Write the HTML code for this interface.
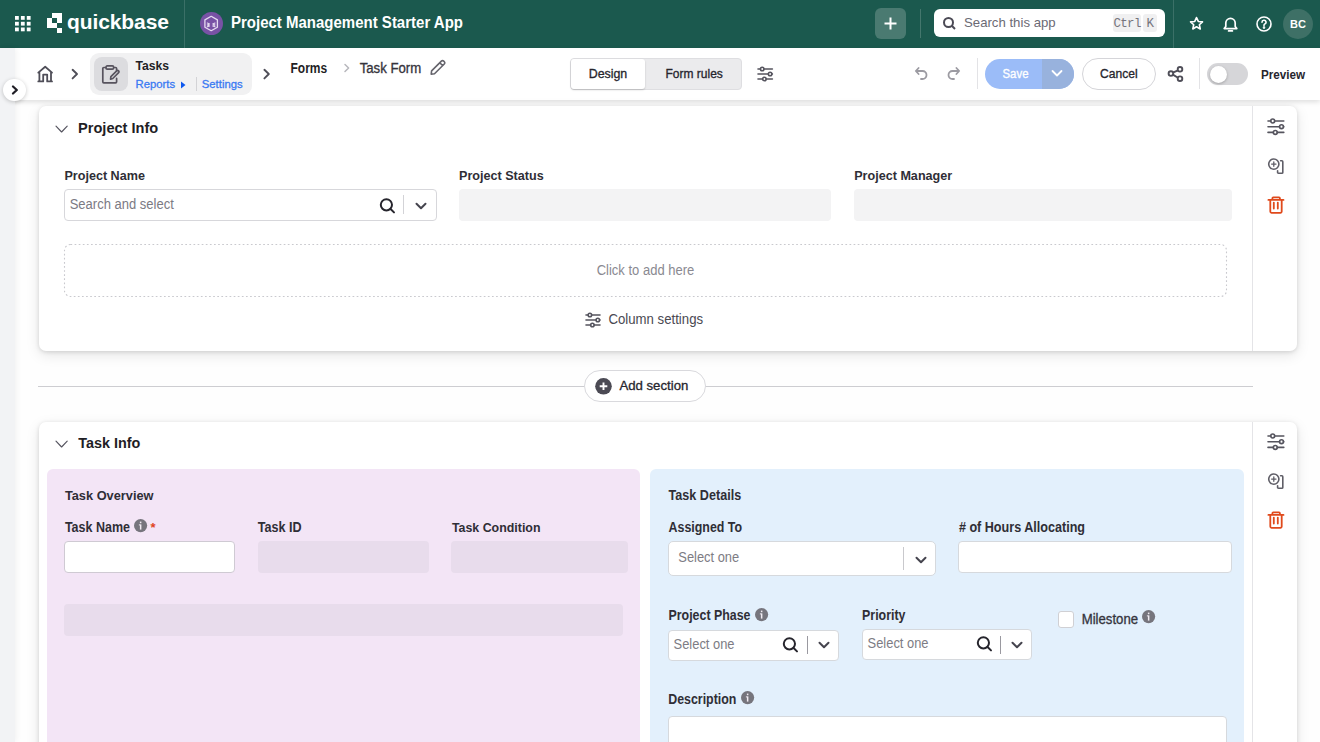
<!DOCTYPE html>
<html><head><meta charset="utf-8">
<style>
*{box-sizing:border-box;margin:0;padding:0}
html,body{width:1320px;height:742px;overflow:hidden;background:#fefefe;font-family:"Liberation Sans",sans-serif;color:#26252d}
.a{position:absolute}
.t{position:absolute;white-space:nowrap;line-height:1}
.m{-webkit-text-stroke:0.3px currentColor}
.lbl,.ph,.t{transform-origin:0 84.5%}
svg{position:absolute;overflow:visible}
#hdr{left:0;top:0;width:1320px;height:48px;background:#1b594e}
#tb{left:0;top:48px;width:1320px;height:52px;background:#fff;box-shadow:0 2px 5px rgba(0,0,0,0.13)}
#side{left:0;top:48px;width:15px;height:694px;background:#f2f3f5;box-shadow:1px 0 6px rgba(0,0,0,0.06)}
.card{position:absolute;background:#fff;border-radius:7px;box-shadow:0 1px 4px rgba(0,0,0,0.13),0 4px 14px rgba(0,0,0,0.10)}
.lbl{position:absolute;white-space:nowrap;line-height:1;font-weight:bold;font-size:12.5px;color:#2f2e36}
.inp{position:absolute;background:#fff;border:1px solid #d7d7db;border-radius:4px}
.ro{position:absolute;background:#f3f3f4;border-radius:4px}
.ph{position:absolute;white-space:nowrap;line-height:1;font-size:13px;color:#7b7a83}
</style></head><body>

<!-- HEADER -->
<div id="hdr" class="a">
  <!-- grid icon -->
  <svg style="left:15.2px;top:16px" width="16" height="16" viewBox="0 0 16 16" fill="#fff"><rect x="0" y="0" width="3.8" height="3.8"/><rect x="5.9" y="0" width="3.8" height="3.8"/><rect x="11.8" y="0" width="3.8" height="3.8"/><rect x="0" y="5.8" width="3.8" height="3.8"/><rect x="5.9" y="5.8" width="3.8" height="3.8"/><rect x="11.8" y="5.8" width="3.8" height="3.8"/><rect x="0" y="11.5" width="3.8" height="3.8"/><rect x="5.9" y="11.5" width="3.8" height="3.8"/><rect x="11.8" y="11.5" width="3.8" height="3.8"/></svg>
  <!-- logo mark -->
  <svg style="left:47px;top:13px" width="15" height="20" viewBox="0 0 15 20" fill="#fff">
    <rect x="5" y="0" width="10" height="5"/>
    <rect x="0" y="5" width="5" height="5"/><rect x="10" y="5" width="5" height="5"/>
    <rect x="0" y="10" width="10" height="5"/>
    <rect x="10" y="15" width="5" height="5"/>
  </svg>
  <div class="t" style="left:67px;top:11px;font-size:21px;font-weight:bold;color:#fff;letter-spacing:-0.1px">quickbase</div>
  <div class="a" style="left:184px;top:0;width:1px;height:48px;background:rgba(255,255,255,0.14)"></div>
  <div class="a" style="left:200px;top:12px;width:23px;height:23px;border-radius:50%;background:#7852a5"></div>
  <svg style="left:200px;top:12px" width="23" height="23" viewBox="0 0 23 23" fill="none" stroke="#e6dbf1" stroke-width="1.3" stroke-linejoin="round" stroke-linecap="round">
    <path d="M11.2 4.3L17.4 7.9V15.2L11.2 18.7L4.9 15.2V7.9Z"/>
    <path d="M7.3 11L9.6 11.9L7.3 12.9L9.6 13.9L7.3 14.8M15 11L12.7 11.9L15 12.9L12.7 13.9L15 14.8" stroke-width="1.1"/>
  </svg>
  <div class="t" style="left:231px;top:15px;font-size:15px;font-weight:bold;color:#fff;transform:scaleY(1.05)">Project Management Starter App</div>

  <div class="a" style="left:875px;top:8px;width:31px;height:31px;border-radius:6px;background:#4a7a71"></div>
  <svg style="left:884px;top:17px" width="13" height="13" viewBox="0 0 13 13" stroke="#fff" stroke-width="2"><path d="M6.5 0.5V12.5M0.5 6.5H12.5"/></svg>
  <div class="a" style="left:920px;top:9px;width:1px;height:29px;background:rgba(255,255,255,0.18)"></div>
  <div class="a" style="left:934px;top:9px;width:231px;height:28px;border-radius:6px;background:#fff"></div>
  <svg style="left:943px;top:17px" width="13" height="13" viewBox="0 0 13 13" fill="none" stroke="#4b4a55" stroke-width="2"><circle cx="5.5" cy="5.5" r="4.5"/><path d="M8.8 8.8L12 12"/></svg>
  <div class="t" style="left:964px;top:16px;font-size:13.2px;color:#6b6a74">Search this app</div>
  <div class="a" style="left:1113px;top:14px;width:28px;height:18px;border-radius:3px;background:#f0f0f1"></div>
  <div class="a" style="left:1143px;top:14px;width:14px;height:18px;border-radius:3px;background:#f0f0f1"></div>
  <div class="t" style="left:1113.5px;top:18.4px;font-family:'Liberation Mono',monospace;font-size:12.5px;letter-spacing:-0.7px;color:#76757e">Ctrl</div>
  <div class="t" style="left:1146.5px;top:18.4px;font-family:'Liberation Mono',monospace;font-size:12.5px;color:#76757e">K</div>
  <div class="a" style="left:1173px;top:0;width:1px;height:48px;background:rgba(255,255,255,0.14)"></div>
  <!-- star -->
  <svg style="left:1189px;top:16px" width="15" height="15" viewBox="0 0 24 24" fill="none" stroke="#fff" stroke-width="2.6" stroke-linejoin="round"><path d="M12 2.5l2.9 6.2 6.7.7-5 4.6 1.4 6.7L12 17.3l-5.9 3.4 1.4-6.7-5-4.6 6.7-.7z"/></svg>
  <!-- bell -->
  <svg style="left:1223px;top:17px" width="15" height="15" viewBox="0 0 15 15" fill="none" stroke="#fff" stroke-width="1.7" stroke-linejoin="round" stroke-linecap="round"><path d="M1.2 11.6H13.8L12.2 9.4V6.1a4.7 4.7 0 0 0-9.4 0V9.4Z"/><path d="M5.6 13.9H9.4"/></svg>
  <!-- help -->
  <svg style="left:1256px;top:16px" width="16" height="16" viewBox="0 0 16 16" fill="none" stroke="#fff" stroke-width="1.6"><circle cx="8" cy="8" r="7"/><path d="M6 6.2a2 2 0 1 1 2.6 1.9c-.4.2-.6.5-.6.9v.6" stroke-linecap="round"/><circle cx="8" cy="11.6" r="0.5" fill="#fff"/></svg>
  <div class="a" style="left:1283px;top:9px;width:30px;height:30px;border-radius:50%;background:#3e7066"></div>
  <div class="t" style="left:1283px;top:19px;width:30px;text-align:center;font-size:11px;font-weight:bold;color:#fff">BC</div>
</div>

<!-- TOOLBAR -->
<div id="tb" class="a"></div>
<div id="side" class="a"></div>
<!-- sidebar expand -->
<div class="a" style="left:3px;top:78.8px;width:22.6px;height:22.6px;border-radius:50%;background:#fff;box-shadow:0 1px 4px rgba(0,0,0,0.22)"></div>
<svg style="left:10.5px;top:84.8px" width="8" height="10" viewBox="0 0 8 10" fill="none" stroke="#1f1e25" stroke-width="2.3" stroke-linecap="round" stroke-linejoin="round"><path d="M2 1.5L5.8 5L2 8.5"/></svg>
<!-- home -->
<svg style="left:37px;top:65px" width="16" height="18" viewBox="0 0 16 18" fill="none" stroke="#4f4e58" stroke-width="1.8" stroke-linejoin="round" stroke-linecap="round"><path d="M1.3 7.6L8.2 1.8L15 7.6M2.4 7.2V16.4M14 7.2V16.4M1.3 16.4H6.2V9.6H10.2V16.4H15"/></svg>
<svg style="left:70px;top:68px" width="10" height="12" viewBox="0 0 10 12" fill="none" stroke="#4f4e58" stroke-width="1.9" stroke-linecap="round" stroke-linejoin="round"><path d="M2.6 1.8L7 6L2.6 10.4"/></svg>
<!-- tasks crumb -->
<div class="a" style="left:90px;top:53px;width:162px;height:42px;border-radius:9px;background:#f1f1f2"></div>
<div class="a" style="left:94px;top:57px;width:34px;height:34px;border-radius:8px;background:#dcdcdf"></div>
<svg style="left:100px;top:64px" width="21" height="21" viewBox="0 0 21 21" fill="none" stroke="#57535e" stroke-width="1.7" stroke-linejoin="round" stroke-linecap="round">
  <path d="M5.6 3.5H3.8a1 1 0 0 0-1 1V17.8a1 1 0 0 0 1 1H15.6a1 1 0 0 0 1-1V14.4M16.6 7V4.5a1 1 0 0 0-1-1H13.9"/>
  <rect x="6" y="1.9" width="7.6" height="3.2" rx="1.2"/>
  <path d="M10.6 15.2L10.9 12.6L16.7 6.8a1.3 1.3 0 0 1 1.9 1.9L12.8 14.5Z"/>
</svg>
<div class="t" style="left:135.5px;top:60.2px;font-size:12.2px;font-weight:bold;color:#1f1e25;transform:scaleY(1.07)">Tasks</div>
<div class="t m" style="left:135.5px;top:78.6px;font-size:11.3px;color:#3a7af3">Reports</div>
<svg style="left:180px;top:80.5px" width="6" height="8" viewBox="0 0 6 8" fill="#0d58ef"><path d="M1 0.5L5.5 4L1 7.5Z"/></svg>
<div class="a" style="left:196px;top:77px;width:1px;height:14px;background:#d3d3d6"></div>
<div class="t m" style="left:201.8px;top:78.6px;font-size:11.3px;color:#3a7af3">Settings</div>
<svg style="left:262px;top:68px" width="10" height="12" viewBox="0 0 10 12" fill="none" stroke="#4f4e58" stroke-width="1.9" stroke-linecap="round" stroke-linejoin="round"><path d="M2.4 1.8L6.8 6L2.4 10.4"/></svg>
<div class="t" style="left:290.5px;top:63.3px;font-size:12px;font-weight:bold;color:#1f1e25;transform:scaleY(1.17)">Forms</div>
<svg style="left:343px;top:63px" width="8" height="10" viewBox="0 0 8 10" fill="none" stroke="#b7b7bc" stroke-width="1.5" stroke-linecap="round" stroke-linejoin="round"><path d="M2 1.5L5.6 5L2 8.5"/></svg>
<div class="t m" style="left:359.7px;top:62.3px;font-size:13.2px;color:#35343c;transform:scaleY(1.05)">Task Form</div>
<svg style="left:429px;top:59px" width="18" height="17" viewBox="0 0 18 17" fill="none" stroke="#65646c" stroke-width="1.6" stroke-linejoin="round"><path d="M2.2 15.2L2.6 11.9L12.4 2.1a1.6 1.6 0 0 1 2.3 0l.6.6a1.6 1.6 0 0 1 0 2.3L5.5 14.8Z M10.8 3.7L13.7 6.6"/></svg>
<!-- segmented -->
<div class="a" style="left:570px;top:58px;width:172px;height:32px;border-radius:4px;background:#ebebed;border:1px solid #dedee1"></div>
<div class="a" style="left:571px;top:59px;width:74px;height:30px;border-radius:3px;background:#fff;box-shadow:0 1px 2px rgba(0,0,0,0.18)"></div>
<div class="t m" style="left:588.7px;top:68px;font-size:12.4px;color:#26252d;transform:scaleY(1.1)">Design</div>
<div class="t m" style="left:665.5px;top:68.3px;font-size:12px;color:#26252d;transform:scaleY(1.1)">Form rules</div>
<svg style="left:754.40px;top:64.90px" width="22.4" height="18.0" viewBox="0 0 22.4 18.0" fill="none" stroke="#55545e" stroke-width="1.6" stroke-linecap="round"><path d="M4.00 4.00H6.45M9.95 4.00H18.40M4.00 9.00H14.35M17.85 9.00H18.40M4.00 14.00H8.65M12.15 14.00H18.40"/><circle cx="8.20" cy="4.00" r="1.75"/><circle cx="16.10" cy="9.00" r="1.75"/><circle cx="10.40" cy="14.00" r="1.75"/></svg>
<!-- undo redo -->
<svg style="left:914px;top:66px" width="15" height="15" viewBox="0 0 15 15" fill="none" stroke="#9c9ba2" stroke-width="1.8" stroke-linecap="round" stroke-linejoin="round"><path d="M4.6 2L1.8 5L4.6 8M2 5H8.5a4 4 0 0 1 0 8H7"/></svg>
<svg style="left:946px;top:66px" width="15" height="15" viewBox="0 0 15 15" fill="none" stroke="#9c9ba2" stroke-width="1.8" stroke-linecap="round" stroke-linejoin="round"><path d="M10.4 2L13.2 5L10.4 8M13 5H6.5a4 4 0 0 0 0 8H8"/></svg>
<div class="a" style="left:977px;top:58px;width:1px;height:31px;background:#e3e3e6"></div>
<!-- save -->
<div class="a" style="left:985px;top:59px;width:89px;height:30px;border-radius:15px;background:#9bbcf8;overflow:hidden"><div class="a" style="left:56.5px;top:0;width:40px;height:30px;background:#98b2dd"></div></div>
<div class="t m" style="left:1002.5px;top:68.65px;font-size:11.4px;color:#fff;transform:scaleY(1.16)">Save</div>
<svg style="left:1051px;top:69px" width="12" height="9" viewBox="0 0 12 9" fill="none" stroke="#fff" stroke-width="1.8" stroke-linecap="round" stroke-linejoin="round"><path d="M1.5 2L6 6.5L10.5 2"/></svg>
<!-- cancel -->
<div class="a" style="left:1082px;top:58px;width:74px;height:32px;border-radius:16px;background:#fff;border:1px solid #d5d5d9"></div>
<div class="t m" style="left:1100px;top:68.2px;font-size:12.1px;color:#26252d;transform:scaleY(1.1)">Cancel</div>
<svg style="left:1166px;top:65px" width="18" height="18" viewBox="0 0 18 18" fill="none" stroke="#4f4e58" stroke-width="1.9"><circle cx="4.9" cy="8.6" r="2.3"/><circle cx="14" cy="4.3" r="2.3"/><circle cx="14" cy="13.7" r="2.3"/><path d="M6.9 7.6L12 5.3M6.9 9.6L12 12.7"/></svg>
<div class="a" style="left:1199px;top:58px;width:1px;height:31px;background:#e3e3e6"></div>
<!-- toggle -->
<div class="a" style="left:1207px;top:63px;width:41px;height:22px;border-radius:11px;background:#d6d6d9"></div>
<div class="a" style="left:1209.8px;top:65.5px;width:17px;height:17px;border-radius:50%;background:#fff;box-shadow:0 1px 3px rgba(0,0,0,0.25)"></div>
<div class="t" style="left:1261px;top:68.5px;font-size:11.7px;font-weight:bold;color:#26252d;transform:scaleY(1.08)">Preview</div>

<div class="card" style="left:38.5px;top:106px;width:1258.5px;height:245px"></div>
<div class="a" style="left:1252px;top:106px;width:1px;height:245px;background:#e4e4e7"></div>
<svg style="left:55px;top:124.7px" width="14" height="9" viewBox="0 0 14 9" fill="none" stroke="#55545f" stroke-width="1.15" stroke-linecap="round" stroke-linejoin="round"><path d="M1 1.2L6.6 7L12.2 1.2"/></svg>
<div class="t" style="left:78px;top:121.24px;font-size:14.6px;font-weight:bold;color:#1f1e25;transform:scaleY(1.03)">Project Info</div>
<div class="lbl" style="left:64.4px;top:169.53px;font-size:12.6px;transform:scaleY(1.06)">Project Name</div>
<div class="lbl" style="left:459px;top:169.53px;font-size:12.6px;transform:scaleY(1.06)">Project Status</div>
<div class="lbl" style="left:854.2px;top:169.53px;font-size:12.6px;transform:scaleY(1.06)">Project Manager</div>
<div class="inp" style="left:64px;top:189px;width:373px;height:32px"></div>
<div class="ph" style="left:69.7px;top:198.3px;font-size:13px;transform:scaleY(1.13)">Search and select</div>
<svg style="left:379px;top:197.5px" width="17" height="17" viewBox="0 0 17 17" fill="none" stroke="#26252d" stroke-width="2"><circle cx="7.4" cy="6.8" r="5.6"/><path d="M11.6 11L15 14.4" stroke-linecap="round"/></svg>
<div class="a" style="left:403px;top:195px;width:1px;height:19px;background:#d3d3d7"></div>
<svg style="left:415px;top:202px" width="12" height="8" viewBox="0 0 12 8" fill="none" stroke="#45444e" stroke-width="2" stroke-linecap="round" stroke-linejoin="round"><path d="M1.5 1.8L6 6.2L10.5 1.8"/></svg>
<div class="ro" style="left:459px;top:189px;width:372px;height:32px"></div>
<div class="ro" style="left:854px;top:189px;width:378px;height:32px"></div>
<svg style="left:64px;top:244px" width="1163" height="53" viewBox="0 0 1163 53"><rect x="0.5" y="0.5" width="1162" height="52" rx="6" fill="none" stroke="#c9c9ce" stroke-width="1.1" stroke-dasharray="1.7 2.4"/></svg>
<div class="t" style="left:596.7px;top:263.8px;font-size:13px;color:#8a8991;transform:scaleY(1.14)">Click to add here</div>
<svg style="left:581.90px;top:310.70px" width="22.0" height="18.0" viewBox="0 0 22.0 18.0" fill="none" stroke="#55545e" stroke-width="1.6" stroke-linecap="round"><path d="M4.00 4.00H6.15M9.65 4.00H18.00M4.00 9.00H14.05M17.55 9.00H18.00M4.00 14.00H8.65M12.15 14.00H18.00"/><circle cx="7.90" cy="4.00" r="1.75"/><circle cx="15.80" cy="9.00" r="1.75"/><circle cx="10.40" cy="14.00" r="1.75"/></svg>
<div class="t" style="left:608.5px;top:312.83px;font-size:13.2px;color:#4a4952;transform:scaleY(1.08)">Column settings</div>
<svg style="left:1263.50px;top:116.90px" width="23.8" height="19.4" viewBox="0 0 23.8 19.4" fill="none" stroke="#55545e" stroke-width="1.6" stroke-linecap="round"><path d="M4.00 4.00H6.75M10.65 4.00H19.80M4.00 9.70H15.55M19.45 9.70H19.80M4.00 15.40H9.35M13.25 15.40H19.80"/><circle cx="8.70" cy="4.00" r="1.95"/><circle cx="17.50" cy="9.70" r="1.95"/><circle cx="11.30" cy="15.40" r="1.95"/></svg>
<svg style="left:1266.5px;top:156.5px" width="18" height="18" viewBox="0 0 18 18" fill="none" stroke="#5f5e67" stroke-width="1.6" stroke-linecap="round"><circle cx="6.8" cy="7.1" r="5.1"/><path d="M6.8 4.9V9.3M4.6 7.1H9" stroke-width="1.3"/><path d="M13.6 3.8H14.9a.9.9 0 0 1 .9.9V15.4a.9.9 0 0 1-.9.9H11.5a.9.9 0 0 1-.9-.9V13.7"/></svg>
<svg style="left:1266.5px;top:196px" width="18" height="18" viewBox="0 0 18 18" fill="none" stroke="#e04a1c" stroke-width="1.8" stroke-linecap="round" stroke-linejoin="round"><path d="M1.4 3.9H16.5M5.4 3.6V2.2a.9.9 0 0 1 .9-.9H12a.9.9 0 0 1 .9.9V3.6M3.3 4.2V15.6a1.2 1.2 0 0 0 1.2 1.2H13.5a1.2 1.2 0 0 0 1.2-1.2V4.2M6.8 6.6V12.6M10.8 6.6V12.6"/></svg>
<div class="a" style="left:38px;top:386px;width:1215px;height:1px;background:#cdcdd1"></div>
<div class="a" style="left:584px;top:370px;width:122px;height:32px;border-radius:16px;background:#fff;border:1px solid #d9d9dd"></div>
<svg style="left:595px;top:378px" width="17" height="17" viewBox="0 0 17 17"><circle cx="8.5" cy="8.3" r="8.3" fill="#4b4a54"/><path d="M8.5 4.5V12.1M4.7 8.3H12.3" stroke="#fff" stroke-width="1.9"/></svg>
<div class="t m" style="left:619.4px;top:379.13px;font-size:13.2px;color:#26252d;transform:scaleY(1.03)">Add section</div>
<div class="card" style="left:38.5px;top:422px;width:1258.5px;height:340px"></div>
<div class="a" style="left:1252px;top:422px;width:1px;height:330px;background:#e4e4e7"></div>
<svg style="left:55px;top:440.2px" width="14" height="9" viewBox="0 0 14 9" fill="none" stroke="#55545f" stroke-width="1.15" stroke-linecap="round" stroke-linejoin="round"><path d="M1 1.2L6.6 7L12.2 1.2"/></svg>
<div class="t" style="left:78.3px;top:435.81px;font-size:14.4px;font-weight:bold;color:#1f1e25;transform:scaleY(1.06)">Task Info</div>
<svg style="left:1263.50px;top:431.50px" width="23.8" height="19.4" viewBox="0 0 23.8 19.4" fill="none" stroke="#55545e" stroke-width="1.6" stroke-linecap="round"><path d="M4.00 4.00H6.75M10.65 4.00H19.80M4.00 9.70H15.55M19.45 9.70H19.80M4.00 15.40H9.35M13.25 15.40H19.80"/><circle cx="8.70" cy="4.00" r="1.95"/><circle cx="17.50" cy="9.70" r="1.95"/><circle cx="11.30" cy="15.40" r="1.95"/></svg>
<svg style="left:1266.5px;top:471.5px" width="18" height="18" viewBox="0 0 18 18" fill="none" stroke="#5f5e67" stroke-width="1.6" stroke-linecap="round"><circle cx="6.8" cy="7.1" r="5.1"/><path d="M6.8 4.9V9.3M4.6 7.1H9" stroke-width="1.3"/><path d="M13.6 3.8H14.9a.9.9 0 0 1 .9.9V15.4a.9.9 0 0 1-.9.9H11.5a.9.9 0 0 1-.9-.9V13.7"/></svg>
<svg style="left:1266.5px;top:511px" width="18" height="18" viewBox="0 0 18 18" fill="none" stroke="#e04a1c" stroke-width="1.8" stroke-linecap="round" stroke-linejoin="round"><path d="M1.4 3.9H16.5M5.4 3.6V2.2a.9.9 0 0 1 .9-.9H12a.9.9 0 0 1 .9.9V3.6M3.3 4.2V15.6a1.2 1.2 0 0 0 1.2 1.2H13.5a1.2 1.2 0 0 0 1.2-1.2V4.2M6.8 6.6V12.6M10.8 6.6V12.6"/></svg>
<div class="a" style="left:47px;top:469px;width:593px;height:300px;border-radius:6px;background:#f3e5f6"></div>
<div class="lbl" style="left:64.9px;top:489.56px;font-size:12.8px;transform:scaleY(1.07)">Task Overview</div>
<div class="lbl" style="left:64.9px;top:521.92px;font-size:12.5px;transform:scaleY(1.1)">Task Name</div>
<svg style="left:133.9px;top:519.4px" width="13.2" height="13.2" viewBox="0 0 13.2 13.2"><circle cx="6.6" cy="6.6" r="6.6" fill="#76757d"/><rect x="5.9" y="5.4" width="1.5" height="5.2" fill="#f1ecf3"/><rect x="4.9" y="5.4" width="1.4" height="1.0" fill="#f1ecf3"/><rect x="5.9" y="2.6" width="1.5" height="1.6" fill="#f1ecf3"/></svg>
<div class="t" style="left:150.5px;top:521px;font-size:13px;font-weight:bold;color:#e0441b">*</div>
<div class="inp" style="left:64px;top:541px;width:171px;height:32px;border-color:#cfcad3"></div>
<div class="lbl" style="left:257.8px;top:521.83px;font-size:12.6px;transform:scaleY(1.1)">Task ID</div>
<div class="ro" style="left:258px;top:541px;width:171px;height:32px;background:#e8dcec"></div>
<div class="lbl" style="left:451.9px;top:522.0px;font-size:12.4px;transform:scaleY(1.1)">Task Condition</div>
<div class="ro" style="left:451px;top:541px;width:177px;height:32px;background:#e8dcec"></div>
<div class="ro" style="left:64px;top:604px;width:559px;height:32px;background:#e8dcec"></div>
<div class="a" style="left:650px;top:469px;width:594px;height:300px;border-radius:6px;background:#e3f0fc"></div>
<div class="lbl" style="left:668.6px;top:489.63px;font-size:12.6px;transform:scaleY(1.11)">Task Details</div>
<div class="lbl" style="left:668.6px;top:522.0px;font-size:12.4px;transform:scaleY(1.13)">Assigned To</div>
<div class="inp" style="left:668px;top:541px;width:268px;height:35px;border-radius:5px;border-color:#d6d9dd"></div>
<div class="ph" style="left:678.3px;top:552.38px;font-size:12.9px;color:#7d7c84;transform:scaleY(1.13)">Select one</div>
<div class="a" style="left:903px;top:547px;width:1px;height:23px;background:#c9c9cd"></div>
<svg style="left:914.5px;top:555.5px" width="12" height="8" viewBox="0 0 12 8" fill="none" stroke="#45444e" stroke-width="2" stroke-linecap="round" stroke-linejoin="round"><path d="M1.5 1.8L6 6.2L10.5 1.8"/></svg>
<div class="lbl" style="left:958.9px;top:521.53px;font-size:12.6px;transform:scaleY(1.13)"># of Hours Allocating</div>
<div class="inp" style="left:958px;top:541px;width:274px;height:32px;border-color:#d6d9dd"></div>
<div class="lbl" style="left:668.5px;top:610.3px;font-size:12.4px;transform:scaleY(1.12)">Project Phase</div>
<svg style="left:754.6px;top:608.1px" width="13.2" height="13.2" viewBox="0 0 13.2 13.2"><circle cx="6.6" cy="6.6" r="6.6" fill="#76757d"/><rect x="5.9" y="5.4" width="1.5" height="5.2" fill="#f1ecf3"/><rect x="4.9" y="5.4" width="1.4" height="1.0" fill="#f1ecf3"/><rect x="5.9" y="2.6" width="1.5" height="1.6" fill="#f1ecf3"/></svg>
<div class="inp" style="left:668px;top:629.5px;width:171px;height:31px;border-color:#d6d9dd"></div>
<div class="ph" style="left:673.6px;top:638.58px;font-size:12.9px;color:#7d7c84;transform:scaleY(1.13)">Select one</div>
<svg style="left:782px;top:636.5px" width="17" height="17" viewBox="0 0 17 17" fill="none" stroke="#26252d" stroke-width="2"><circle cx="7.4" cy="6.8" r="5.6"/><path d="M11.6 11L15 14.4" stroke-linecap="round"/></svg>
<div class="a" style="left:807px;top:636px;width:1px;height:18px;background:#9a99a0"></div>
<svg style="left:817.5px;top:641px" width="12" height="8" viewBox="0 0 12 8" fill="none" stroke="#45444e" stroke-width="2" stroke-linecap="round" stroke-linejoin="round"><path d="M1.5 1.8L6 6.2L10.5 1.8"/></svg>
<div class="lbl" style="left:862.1px;top:610.0px;font-size:12.4px;transform:scaleY(1.12)">Priority</div>
<div class="inp" style="left:862px;top:629px;width:170px;height:31px;border-color:#d6d9dd"></div>
<div class="ph" style="left:867.6px;top:638.28px;font-size:12.9px;color:#7d7c84;transform:scaleY(1.13)">Select one</div>
<svg style="left:976.2px;top:636px" width="17" height="17" viewBox="0 0 17 17" fill="none" stroke="#26252d" stroke-width="2"><circle cx="7.4" cy="6.8" r="5.6"/><path d="M11.6 11L15 14.4" stroke-linecap="round"/></svg>
<div class="a" style="left:1000px;top:635.5px;width:1px;height:18px;background:#9a99a0"></div>
<svg style="left:1011px;top:640.5px" width="12" height="8" viewBox="0 0 12 8" fill="none" stroke="#45444e" stroke-width="2" stroke-linecap="round" stroke-linejoin="round"><path d="M1.5 1.8L6 6.2L10.5 1.8"/></svg>
<div class="a" style="left:1057.5px;top:610.5px;width:16px;height:17px;border-radius:3px;background:#fff;border:1px solid #d0d0d4"></div>
<div class="t m" style="left:1081.7px;top:612.53px;font-size:13.2px;color:#35343c;transform:scaleY(1.1)">Milestone</div>
<svg style="left:1142.3px;top:610.4px" width="13.2" height="13.2" viewBox="0 0 13.2 13.2"><circle cx="6.6" cy="6.6" r="6.6" fill="#76757d"/><rect x="5.9" y="5.4" width="1.5" height="5.2" fill="#f1ecf3"/><rect x="4.9" y="5.4" width="1.4" height="1.0" fill="#f1ecf3"/><rect x="5.9" y="2.6" width="1.5" height="1.6" fill="#f1ecf3"/></svg>
<div class="lbl" style="left:668.2px;top:694.3px;font-size:12.4px;transform:scaleY(1.11)">Description</div>
<svg style="left:740.9px;top:690.8px" width="13.2" height="13.2" viewBox="0 0 13.2 13.2"><circle cx="6.6" cy="6.6" r="6.6" fill="#76757d"/><rect x="5.9" y="5.4" width="1.5" height="5.2" fill="#f1ecf3"/><rect x="4.9" y="5.4" width="1.4" height="1.0" fill="#f1ecf3"/><rect x="5.9" y="2.6" width="1.5" height="1.6" fill="#f1ecf3"/></svg>
<div class="inp" style="left:668px;top:715.5px;width:559px;height:60px;border-color:#d6d9dd"></div>
</body></html>
